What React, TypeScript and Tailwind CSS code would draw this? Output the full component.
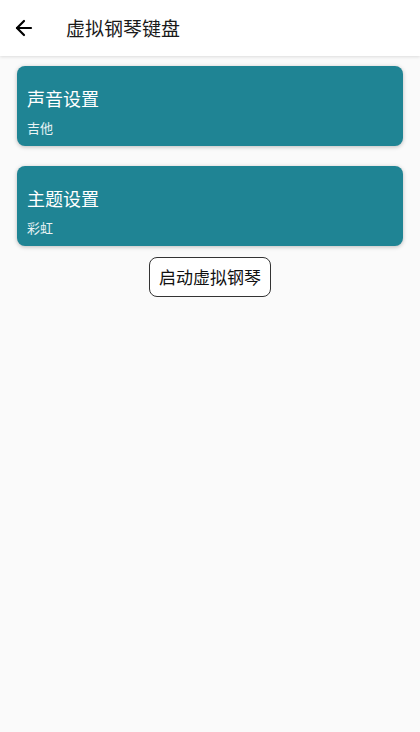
import { ArrowLeft } from 'lucide-react';

const font = { fontFamily: '"Noto Sans CJK SC", Roboto, sans-serif' };

function SettingCard({ title, value }: { title: string; value: string }) {
  return (
    <div className="h-20 rounded-lg bg-[#1f8494] px-[10px] pt-[20px] shadow-[0_1px_4px_rgba(0,0,0,0.25)] flex flex-col text-white">
      <div className="text-[18px] leading-6">{title}</div>
      <div className="text-[13px] leading-4 mt-[10px] text-white/90">{value}</div>
    </div>
  );
}

export default function App() {
  return (
    <div className="w-[420px] h-[732px] bg-[#fafafa] flex flex-col" style={font}>
      {/* App bar */}
      <div className="h-14 bg-white flex items-center shadow-[0_1px_3px_rgba(0,0,0,0.12)] z-10 shrink-0">
        <button className="w-12 pl-[12px] flex items-center text-black">
          <ArrowLeft className="w-6 h-6" strokeWidth={2.2} />
        </button>
        <span className="ml-[18px] text-[19px] text-[#1a1a1a]">虚拟钢琴键盘</span>
      </div>

      <div className="px-[17px] pt-[10px] flex flex-col gap-5">
        <SettingCard title="声音设置" value="吉他" />
        <SettingCard title="主题设置" value="彩虹" />
      </div>

      <div className="flex justify-center mt-[11px]">
        <button className="h-10 px-[9px] rounded-lg border border-[#333] bg-white text-[17px] text-[#111]">
          启动虚拟钢琴
        </button>
      </div>
    </div>
  );
}
